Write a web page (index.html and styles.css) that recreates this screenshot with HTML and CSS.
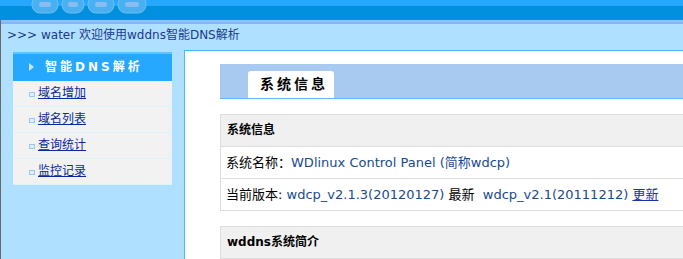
FILE: index.html
```html
<!DOCTYPE html>
<html lang="zh">
<head>
<meta charset="utf-8">
<title>wddns</title>
<link rel="stylesheet" href="styles.css">
</head>
<body>
<div class="top">
  <svg class="logo" width="124" height="20" viewBox="0 0 124 20">
    <g fill="#49b0f2" stroke="#6cbef2" stroke-width="1">
      <rect x="2" y="-4" width="26" height="17" rx="8"/>
      <rect x="32" y="-4" width="22" height="17" rx="8"/>
      <rect x="58" y="-4" width="26" height="17" rx="8"/>
      <rect x="88" y="-4" width="28" height="17" rx="8"/>
    </g>
    <g fill="#9cc0f0" opacity="0.8">
      <rect x="9" y="2" width="12" height="5" rx="2.5"/>
      <rect x="38" y="2" width="10" height="5" rx="2.5"/>
      <rect x="65" y="2" width="12" height="5" rx="2.5"/>
      <rect x="95" y="2" width="14" height="5" rx="2.5"/>
    </g>
  </svg>
</div>
<div class="page">
  <div class="stripe"></div>
  <div class="crumb">&gt;&gt;&gt; water 欢迎使用wddns智能DNS解析</div>
  <div class="body">
    <aside class="side">
      <div class="menu">
        <div class="menu-title"><span class="arrow"></span>智能DNS解析</div>
        <ul class="menu-list">
          <li><span class="bullet"></span><a href="#">域名增加</a></li>
          <li><span class="bullet"></span><a href="#">域名列表</a></li>
          <li><span class="bullet"></span><a href="#">查询统计</a></li>
          <li><span class="bullet"></span><a href="#">监控记录</a></li>
        </ul>
      </div>
    </aside>
    <main class="content">
      <div class="tabs"><div class="tab">系统信息</div></div>
      <section class="box">
        <div class="box-head">系统信息</div>
        <div class="row">系统名称：<span class="val">WDlinux Control Panel (简称wdcp)</span></div>
        <div class="row">当前版本: <span class="val">wdcp_v2.1.3(20120127)</span> 最新&nbsp; <span class="val">wdcp_v2.1(20111212)</span> <a href="#" class="upd">更新</a></div>
      </section>
      <section class="box">
        <div class="box-head">wddns系统简介</div>
        <div class="row"></div>
      </section>
    </main>
  </div>
</div>
</body>
</html>
```
FILE: styles.css
```css
html, body {
  margin: 0;
  padding: 0;
  overflow: hidden;
}
body {
  width: 900px;
  font: 12px "DejaVu Sans", "Noto Sans CJK SC", sans-serif;
  color: #000;
  background: #fff;
}
.top {
  height: 20px;
  background: linear-gradient(#26a8ff 0 6px, #0090dd 6px);
  position: relative;
}
.logo {
  position: absolute;
  left: 30px;
  top: 0;
}
.page {
  border-left: 1px solid #6a6a6a;
  background: #b0e0ff;
}
.stripe {
  height: 4px;
  background: linear-gradient(#80c8f8 0 2px, #8cb4f0 2px);
}
.crumb {
  height: 26px;
  line-height: 23px;
  padding-left: 6px;
  color: #1c3a8c;
}
.body {
  display: flex;
  height: 300px;
}
.side {
  width: 183px;
  padding-top: 2px;
}
.menu {
  margin-left: 12px;
  width: 159px;
}
.menu-title {
  height: 27px;
  line-height: 27px;
  border-top: 2px solid #5cc4ff;
  background: #26a8ff;
  color: #fff;
  font-weight: bold;
  letter-spacing: 3px;
  padding-left: 32px;
  position: relative;
}
.arrow {
  position: absolute;
  left: 16px;
  top: 9px;
  width: 0;
  height: 0;
  border-left: 5px solid #c8e4ff;
  border-top: 4px solid transparent;
  border-bottom: 4px solid transparent;
}
.menu-list {
  list-style: none;
  margin: 0;
  padding: 0;
}
.menu-list li {
  height: 25px;
  line-height: 25px;
  background: #f2f2f2;
  border-bottom: 1px solid #dcf2ff;
  border-right: 1px solid #e4f4ff;
  display: flex;
  align-items: center;
  padding-left: 16px;
}
.bullet {
  width: 4px;
  height: 3px;
  border: 1px solid #9cc8f0;
  background: #e0efff;
  margin-right: 3px;
  margin-top: 2px;
}
.menu-list a {
  color: #0a2a9a;
  text-decoration: underline;
}
.content {
  flex: 1;
  background: #fff;
  border-top: 1px solid #4ab8ff;
  border-left: 1px solid #4ab8ff;
  padding: 13px 0 0 35px;
}
.tabs {
  height: 34px;
  background: #a8caf0;
  border-bottom: 1px solid #5cbcff;
  display: flex;
  align-items: flex-end;
  padding-left: 28px;
}
.tab {
  height: 27px;
  line-height: 26px;
  background: #fff;
  border-radius: 3px 3px 0 0;
  padding: 0 6px 0 12px;
  font-size: 14px;
  font-weight: bold;
  letter-spacing: 3px;
}
.box {
  border: 1px solid #dddddd;
  margin-top: 15px;
}
.box-head {
  height: 31px;
  line-height: 31px;
  background: #f0f0f0;
  border-bottom: 1px solid #dddddd;
  padding-left: 6px;
  font-weight: bold;
}
.row {
  height: 31px;
  line-height: 31px;
  padding-left: 5px;
  font-size: 13px;
  border-bottom: 1px solid #dddddd;
}
.row:last-child {
  border-bottom: none;
}
.val {
  color: #1a4a8c;
}
.upd {
  color: #1a35a8;
  text-decoration: underline;
}
```
